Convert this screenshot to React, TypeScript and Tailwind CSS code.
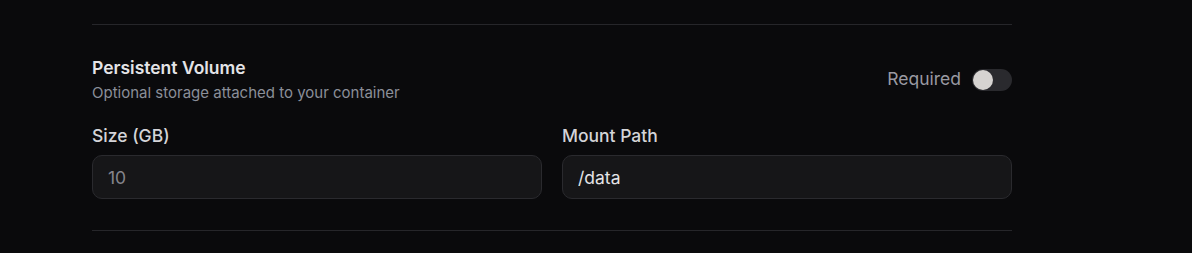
import { useState } from 'react';

export default function App() {
    const [required, setRequired] = useState(false);

    return (
        <div className="min-h-[253px] w-full bg-[#0a0a0c] font-['Inter',sans-serif]">
            <div className="h-[24px]" />
            <div className="ml-[92px] w-[920px] border-y border-[#26262a] pt-[31px] pb-[31px]">
                <div className="flex items-center justify-between">
                    <div>
                        <h3 className="text-[17.5px] font-semibold leading-6 text-[#e4e4e7]">Persistent Volume</h3>
                        <p className="mt-[3px] text-[15px] leading-5 text-[#8b8f99]">
                            Optional storage attached to your container
                        </p>
                    </div>
                    <label className="flex items-center gap-[11px]">
                        <span className="text-[17.5px] text-[#9a9aa2]">Required</span>
                        <button
                            type="button"
                            onClick={() => setRequired(!required)}
                            className={`relative h-[22px] w-[40px] rounded-full ${required ? 'bg-[#3b82f6]' : 'bg-[#2a2a2e]'}`}
                        >
                            <span
                                className={`absolute top-[1px] h-[20px] w-[20px] rounded-full bg-[#d6d3d1] ${required ? 'left-[19px]' : 'left-[1px]'}`}
                            />
                        </button>
                    </label>
                </div>

                <div className="mt-[21px] grid grid-cols-2 gap-5">
                    <div className="flex flex-col gap-[7px]">
                        <span className="text-[17.5px] font-medium leading-6 text-[#d4d4d8]">Size (GB)</span>
                        <input
                            defaultValue=""
                            placeholder="10"
                            className="h-[44px] w-full rounded-[10px] border border-[#2a2a2e] bg-[#161618] px-[15px] text-[17.5px] text-[#e4e4e7] placeholder:text-[#85858c] outline-none"
                        />
                    </div>
                    <div className="flex flex-col gap-[7px]">
                        <span className="text-[17.5px] font-medium leading-6 text-[#d4d4d8]">Mount Path</span>
                        <input
                            defaultValue="/data"
                            className="h-[44px] w-full rounded-[10px] border border-[#2a2a2e] bg-[#161618] px-[15px] text-[17.5px] text-[#e4e4e7] outline-none"
                        />
                    </div>
                </div>
            </div>
        </div>
    );
}
